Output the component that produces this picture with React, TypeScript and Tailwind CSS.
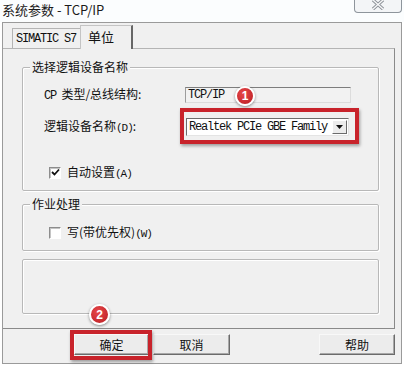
const mono = "font-['Liberation_Mono',monospace] text-[12px] tracking-[-1.2px]";
const small = "font-['Liberation_Mono',monospace] text-[11px] tracking-[-1px]";

function Badge({ n, className }: { n: string; className: string }) {
  return (
    <div
      className={`absolute flex items-center justify-center rounded-full border-2 border-white bg-[radial-gradient(circle_at_40%_35%,#e8474a,#b81d22)] shadow-[0_1px_3px_rgba(0,0,0,0.45)] font-['Liberation_Sans',sans-serif] text-[12px] font-bold leading-none text-white ${className}`}
    >
      {n}
    </div>
  );
}

function CheckBox({ checked }: { checked: boolean }) {
  return (
    <div className="flex h-[12px] w-[12px] items-center justify-center border border-t-[#8d8d8d] border-l-[#8d8d8d] border-r-white border-b-white bg-white shadow-[inset_1px_1px_0_#c4c4c4]">
      {checked && (
        <svg width="9" height="9" viewBox="0 0 9 9">
          <path d="M1 4 L3.5 6.5 L8 1.5" fill="none" stroke="#111" strokeWidth="1.8" />
        </svg>
      )}
    </div>
  );
}

function Group({ title, className, children }: { title?: string; className: string; children?: React.ReactNode }) {
  return (
    <div
      className={`relative w-[357px] rounded-[2px] border border-[#b8b8b8] shadow-[inset_1px_1px_0_#ffffff,1px_1px_0_#ffffff] ${className}`}
    >
      {title && (
        <div className="absolute -top-[8px] left-[7px] bg-[#f0f0f0] px-[2px] leading-[14px]">{title}</div>
      )}
      {children}
    </div>
  );
}

function Button({ label, className }: { label: string; className: string }) {
  return (
    <div
      className={`flex h-[21px] items-center justify-center border border-t-[#f8f8f8] border-l-[#f8f8f8] border-r-[#6b6b6b] border-b-[#6b6b6b] bg-[#ececec] shadow-[inset_-1px_-1px_0_#a8a8a8] leading-none ${className}`}
    >
      {label}
    </div>
  );
}

export default function App() {
  return (
    <div className="relative h-[370px] w-[404px] overflow-hidden bg-white font-['Noto_Sans_CJK_SC',sans-serif] text-[12px] text-[#111]">
      {/* title bar */}
      <div className="flex h-[22px] items-start justify-between bg-[#fbfdfe]">
        <div className="pl-[2px] pt-[1px] text-[13px] leading-[17px] text-[#1b1b1b]">系统参数 - TCP/IP</div>
        <div className="mr-[2px] flex h-[13px] w-[48px] items-start justify-center rounded-b-[4px] border border-t-0 border-[#8e959c] bg-[#f3f5f7]">
          <svg width="14" height="10" viewBox="0 0 14 10">
            <path d="M2 0 L12 9 M12 0 L2 9" stroke="#8a8f96" strokeWidth="3.2" />
            <path d="M2 0 L12 9 M12 0 L2 9" stroke="#f6f7f8" strokeWidth="1.4" />
          </svg>
        </div>
      </div>

      {/* dialog body */}
      <div className="mx-[2px] flex h-[342px] flex-col border border-[#9a9a9a] bg-[#f0f0f0]">
        {/* tabs */}
        <div className="flex h-[25px] items-end pl-[9px]">
          <div className={`flex h-[20px] w-[68px] items-center border-t border-l border-[#b4b4b4] pl-[3px] ${mono}`}>
            SIMATIC S7
          </div>
          <div className="relative z-10 -mb-[1px] flex h-[24px] w-[53px] items-center border-t border-l border-[#c4c4c4] border-r-2 border-r-[#666] bg-[#f0f0f0] pl-[7px] pb-[2px] text-[13px] leading-none">
            单位
          </div>
        </div>

        {/* tab panel */}
        <div className="flex h-[281px] w-[392px] flex-col border-t border-r border-b border-t-[#b4b4b4] border-r-[#8a8a8a] border-b-[#8a8a8a] pl-[19px]">
          <Group title="选择逻辑设备名称" className="mt-[18px] h-[124px]">
            <div className="mt-[19px] flex h-[16px] items-center">
              <div className="w-[162px] pl-[21px] leading-none">
                <span className={mono}>CP</span>&nbsp;&nbsp;类型/总线结构:
              </div>
              <div className={`flex h-[16px] w-[166px] items-center border border-t-[#7d7d7d] border-l-[#9d9d9d] border-r-[#dcdcdc] border-b-[#dcdcdc] bg-[#f2f2f2] pl-[2px] ${mono}`}>
                TCP/IP
              </div>
            </div>
            <div className="mt-[15px] flex h-[18px] items-center">
              <div className="w-[163px] pl-[21px] leading-none">
                逻辑设备名称<span className={small}>(D)</span>:
              </div>
              <div className="flex h-[18px] w-[163px] items-center justify-between border border-t-[#6d6d6d] border-l-[#6d6d6d] border-r-[#e4e4e4] border-b-[#e4e4e4] bg-white pl-[2px] pr-[1px]">
                <span className={mono}>Realtek PCIe GBE Family</span>
                <div className="flex h-[14px] w-[15px] items-center justify-center border border-t-white border-l-white border-r-[#6b6b6b] border-b-[#6b6b6b] bg-[#ececec]">
                  <svg width="7" height="4" viewBox="0 0 7 4">
                    <path d="M0 0 H7 L3.5 4 Z" fill="#111" />
                  </svg>
                </div>
              </div>
            </div>
            <div className="mt-[30px] flex h-[13px] items-center gap-[6px] pl-[26px]">
              <CheckBox checked />
              <span className="leading-none">
                自动设置<span className={small}>(A)</span>
              </span>
            </div>
          </Group>

          <Group title="作业处理" className="mt-[13px] h-[47px]">
            <div className="mt-[21px] flex h-[13px] items-center gap-[6px] pl-[26px]">
              <CheckBox checked={false} />
              <span className="leading-none">
                写(带优先权)<span className={small}>(W)</span>
              </span>
            </div>
          </Group>

          <Group className="mt-[8px] h-[55px]" />
        </div>

        {/* buttons */}
        <div className="mt-[5px] flex items-center pl-[71px] pr-[6px]">
          <Button label="确定" className="w-[75px]" />
          <Button label="取消" className="ml-[4px] w-[77px]" />
          <Button label="帮助" className="ml-auto w-[76px]" />
        </div>
      </div>

      {/* annotations */}
      <div className="absolute left-[180px] top-[108px] h-[36px] w-[179px] border-[4px] border-[#c8232b] shadow-[1px_2px_3px_rgba(0,0,0,0.35)]" />
      <div className="absolute left-[70px] top-[330px] h-[30px] w-[82px] border-[4px] border-[#c8232b] shadow-[1px_2px_3px_rgba(0,0,0,0.35)]" />
      <Badge n="1" className="left-[235px] top-[86px] h-[20px] w-[20px]" />
      <Badge n="2" className="left-[89px] top-[304px] h-[21px] w-[21px]" />
    </div>
  );
}
